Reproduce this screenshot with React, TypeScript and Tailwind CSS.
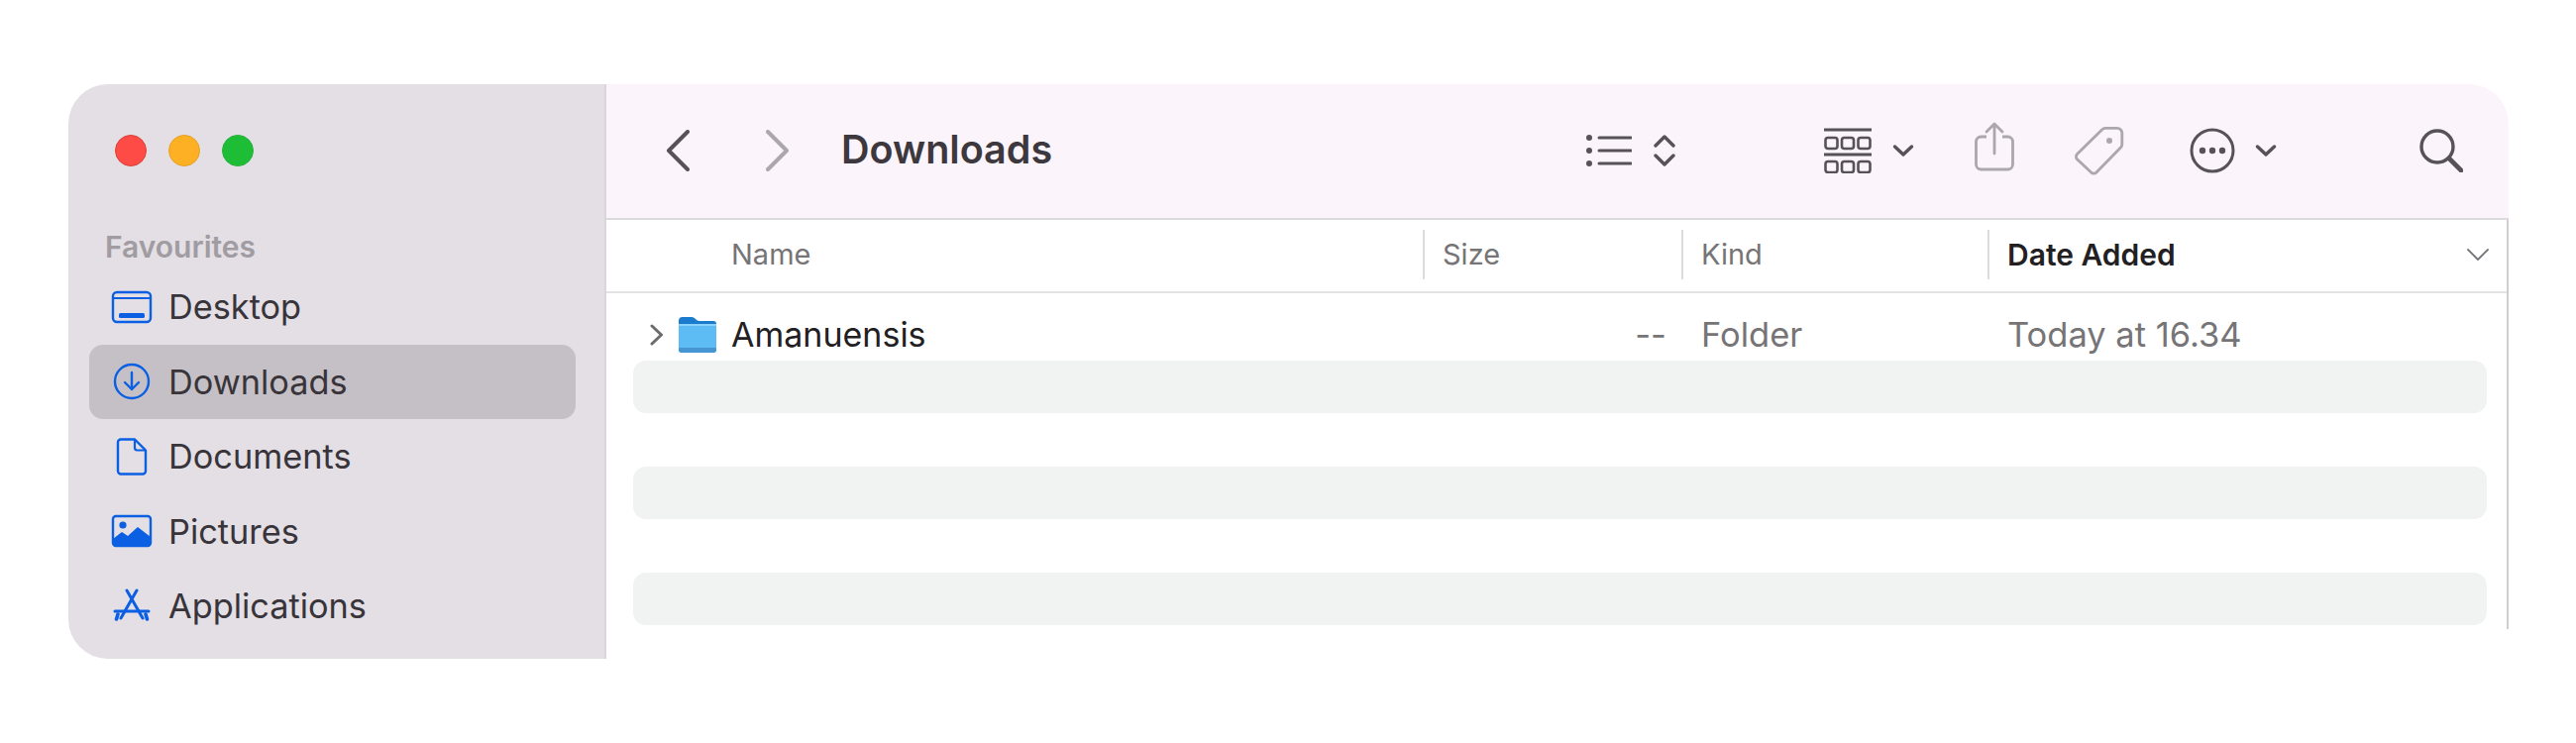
const FONT = "font-['Inter','Liberation_Sans',sans-serif]";

const IconBox = ({ w, h, children, className = "" }: { w: number; h: number; children: React.ReactNode; className?: string }) => (
  <svg width={w} height={h} viewBox={`0 0 ${w} ${h}`} fill="none" className={`shrink-0 ${className}`}>{children}</svg>
);

const BLUE = "#0b5fe3";

const DesktopIcon = () => (
  <IconBox w={44} h={34}>
    <rect x="3" y="2" width="38" height="30" rx="4" stroke={BLUE} strokeWidth="2.4" />
    <path d="M3 8h38" stroke={BLUE} strokeWidth="1.8" />
    <rect x="9" y="23" width="26" height="5" rx="1.5" fill={BLUE} />
  </IconBox>
);
const DownloadIcon = () => (
  <IconBox w={44} h={40}>
    <circle cx="22" cy="20" r="17" stroke={BLUE} strokeWidth="2.4" />
    <path d="M22 11v17M15 21l7 7 7-7" stroke={BLUE} strokeWidth="2.4" strokeLinecap="round" strokeLinejoin="round" />
  </IconBox>
);
const DocumentIcon = () => (
  <IconBox w={44} h={40}>
    <path d="M8 5.5a3 3 0 0 1 3-3h14l11 11v21a3 3 0 0 1-3 3H11a3 3 0 0 1-3-3z" stroke={BLUE} strokeWidth="2.4" strokeLinejoin="round" />
    <path d="M25 3v8a2.500 2.500 0 0 0 2.500 2.500H36" stroke={BLUE} strokeWidth="2.2" />
  </IconBox>
);
const PicturesIcon = () => (
  <IconBox w={44} h={34}>
    <rect x="3" y="2" width="38" height="30" rx="3" stroke={BLUE} strokeWidth="2.4" />
    <circle cx="13" cy="11" r="3.600" fill={BLUE} />
    <path d="M3 25l9-7 6 4 10-9 13 10v6a3 3 0 0 1-3 3H6a3 3 0 0 1-3-3z" fill={BLUE} />
  </IconBox>
);
const AppsIcon = () => (
  <IconBox w={44} h={36}>
    <path d="M17 2l16 28M27 2L11 30" stroke={BLUE} strokeWidth="3" strokeLinecap="round" />
    <path d="M5 23h34" stroke={BLUE} strokeWidth="3" strokeLinecap="round" />
    <path d="M8 26l-1.500 5M36 26l1.500 5" stroke={BLUE} strokeWidth="3.600" strokeLinecap="round" />
  </IconBox>
);

const DARK = "#575258";
const GREY = "#aba7ac";

const Caret = () => (
  <IconBox w={22} h={14}>
    <path d="M2.500 3l8.500 8 8.500-8" stroke={DARK} strokeWidth="3.400" strokeLinecap="round" strokeLinejoin="round" />
  </IconBox>
);

const ListIcon = () => (
  <IconBox w={46} h={34}>
    <g fill={DARK}>
      <circle cx="3" cy="4" r="3" />
      <circle cx="3" cy="17" r="3" />
      <circle cx="3" cy="30" r="3" />
    </g>
    <path d="M13 4h32M13 17h32M13 30h32" stroke={DARK} strokeWidth="3" strokeLinecap="round" />
  </IconBox>
);
const UpDown = () => (
  <IconBox w={22} h={36}>
    <path d="M2 13l9-9 9 9M2 23l9 9 9-9" stroke={DARK} strokeWidth="3.400" strokeLinecap="round" strokeLinejoin="round" />
  </IconBox>
);
const GroupIcon = () => (
  <IconBox w={48} h={46}>
    <path d="M0 2h48M0 27h48" stroke={DARK} strokeWidth="3" />
    {[0, 1, 2].map((i) => (
      <g key={i} stroke={DARK} strokeWidth="2.600">
        <rect x={1.5 + i * 16.5} y="10" width="12" height="11" rx="2.500" />
        <rect x={1.5 + i * 16.5} y="34" width="12" height="11" rx="2.500" />
      </g>
    ))}
  </IconBox>
);
const ShareIcon = () => (
  <IconBox w={40} h={50}>
    <path d="M12 15H6.500a5 5 0 0 0-5 5v23a5 5 0 0 0 5 5h27a5 5 0 0 0 5-5V20a5 5 0 0 0-5-5H28" stroke={GREY} strokeWidth="2.800" />
    <path d="M20 32V3M12 10l8-8 8 8" stroke={GREY} strokeWidth="2.800" strokeLinecap="round" strokeLinejoin="round" />
  </IconBox>
);
const TagIcon = () => (
  <IconBox w={50} h={50}>
    <path d="M2.500 28.500L28 3.500a4 4 0 0 1 2.800-1.200h12a5 5 0 0 1 5 5v11.500a4 4 0 0 1-1.200 2.900L22 47a3.800 3.800 0 0 1-5.400 0L2.500 33.800a3.800 3.800 0 0 1 0-5.300z" stroke={GREY} strokeWidth="2.800" strokeLinejoin="round" />
    <circle cx="35" cy="15" r="3" fill={GREY} />
  </IconBox>
);
const MoreIcon = () => (
  <IconBox w={46} h={46}>
    <circle cx="23" cy="23" r="21" stroke={DARK} strokeWidth="3" />
    <g fill={DARK}>
      <circle cx="13" cy="23" r="3.200" />
      <circle cx="23" cy="23" r="3.200" />
      <circle cx="33" cy="23" r="3.200" />
    </g>
  </IconBox>
);
const SearchIcon = () => (
  <IconBox w={44} h={44}>
    <circle cx="18" cy="18" r="16" stroke={DARK} strokeWidth="3.400" />
    <path d="M30 30l12 12" stroke={DARK} strokeWidth="4.600" strokeLinecap="round" />
  </IconBox>
);
const Folder = () => (
  <IconBox w={40} h={38}>
    <path d="M1 5a4 4 0 0 1 4-4h9c2 0 3 1 4.500 2.500S21 5 23 5h13a3 3 0 0 1 3 3v8H1z" fill="#1b7ccd" />
    <rect x="1" y="8" width="38" height="29" rx="3" fill="#5ebcf5" />
    <rect x="1" y="8" width="38" height="2" fill="#8dd2f8" />
    <path d="M1 32h38v2a3 3 0 0 1-3 3H4a3 3 0 0 1-3-3z" fill="#4495d2" />
  </IconBox>
);

const sidebarItems = [
  { label: "Desktop", icon: <DesktopIcon /> },
  { label: "Downloads", icon: <DownloadIcon />, active: true },
  { label: "Documents", icon: <DocumentIcon /> },
  { label: "Pictures", icon: <PicturesIcon /> },
  { label: "Applications", icon: <AppsIcon /> },
];

export default function App() {
  return (
    <div className={`min-h-[750px] bg-white pl-[69px] pt-[85px] ${FONT}`}>
      <div className="flex h-[580px] w-[2463px]">
        <aside className="w-[543px] shrink-0 rounded-l-[40px] border-r-2 border-[#d9d5da] bg-[#e3dfe4]">
          <div className="flex gap-[22px] pl-[47px] pt-[51px]">
            <span className="h-[32px] w-[32px] rounded-full border border-[#d9413c] bg-[#ff4b45]" />
            <span className="h-[32px] w-[32px] rounded-full border border-[#e3a32b] bg-[#feb024]" />
            <span className="h-[32px] w-[32px] rounded-full border border-[#2bb03f] bg-[#1dbe35]" />
          </div>
          <div className="mt-[64px] pl-[37px] text-[30px] font-semibold leading-[34px] text-[#a09ca2]">Favourites</div>
          <nav className="mt-[6px] flex flex-col pl-[21px] pr-[29px]">
            {sidebarItems.map((item) => (
              <div
                key={item.label}
                className={`flex h-[75.500px] items-center gap-[15px] rounded-[14px] pl-[21px] text-[34.300px] text-[#38343a] ${item.active ? "bg-[#c5c0c6]" : ""}`}
              >
                {item.icon}
                <span>{item.label}</span>
              </div>
            ))}
          </nav>
        </aside>
        <main className="flex min-w-0 flex-1 flex-col">
          <header className="flex h-[137px] shrink-0 items-center rounded-tr-[40px] border-b-2 border-[#dcdadd] bg-[#fbf4fb] pb-[2px] pl-[60px]">
            <svg width="24" height="42" viewBox="0 0 24 42" fill="none" className="shrink-0">
              <path d="M22 2L3 21l19 19" stroke={DARK} strokeWidth="4" strokeLinecap="round" strokeLinejoin="round" />
            </svg>
            <svg width="24" height="42" viewBox="0 0 24 42" fill="none" className="ml-[77px] shrink-0">
              <path d="M2 2l19 19L2 40" stroke={GREY} strokeWidth="4" strokeLinecap="round" strokeLinejoin="round" />
            </svg>
            <h1 className="ml-[52px] w-[212px] whitespace-nowrap text-[39.500px] font-semibold leading-none text-[#3c383d]">Downloads</h1>
            <div className="ml-[540px] flex items-center gap-[22px]"><ListIcon /><UpDown /></div>
            <div className="ml-[150px] flex items-center gap-[21px]"><GroupIcon /><Caret /></div>
            <div className="mb-[7px] ml-[61px]"><ShareIcon /></div>
            <div className="ml-[61px]"><TagIcon /></div>
            <div className="ml-[66px] flex items-center gap-[20px]"><MoreIcon /><Caret /></div>
            <div className="ml-[144px]"><SearchIcon /></div>
          </header>
          <div className="flex min-h-0 flex-1 flex-col pb-[30px]">
            <div className="flex min-h-0 flex-1 flex-col border-r-2 border-[#cfcdd0]">
              <div className="flex h-[74px] shrink-0 items-center border-b-2 border-[#e4e2e4] pb-[2px] text-[29px] text-[#767476]">
                <div className="w-[824px] pl-[126px]">Name</div>
                <div className="flex h-[50px] w-[261px] items-center border-l-2 border-[#dddcdd] pl-[18px]">Size</div>
                <div className="flex h-[50px] w-[309px] items-center border-l-2 border-[#dddcdd] pl-[18px]">Kind</div>
                <div className="flex h-[50px] flex-1 items-center justify-between border-l-2 border-[#dddcdd] pl-[18px] pr-[17px] text-[30px] font-semibold text-[#222022]">
                  <span>Date Added</span>
                  <svg width="24" height="14" viewBox="0 0 24 14" fill="none">
                    <path d="M2 2l10 10L22 2" stroke="#77757a" strokeWidth="1.800" strokeLinecap="round" strokeLinejoin="round" />
                  </svg>
                </div>
              </div>
              <div className="flex h-[68px] shrink-0 items-center pt-[15px] text-[34.500px] text-[#767476]">
                <div className="flex w-[824px] items-center pl-[44px] text-[#222022]">
                  <svg width="14" height="22" viewBox="0 0 14 22" fill="none" className="shrink-0">
                    <path d="M2 2l9.500 9L2 20" stroke="#6d6b6e" strokeWidth="3" strokeLinecap="round" strokeLinejoin="round" />
                  </svg>
                  <span className="ml-[14px]"><Folder /></span>
                  <span className="ml-[14px] text-[34px]">Amanuensis</span>
                </div>
                <div className="w-[261px] pr-[15px] text-right">--</div>
                <div className="w-[309px] pl-[20px]">Folder</div>
                <div className="pl-[20px]">Today at 16.34</div>
              </div>
              <div className="flex flex-col gap-[54px] pl-[27px] pr-[20px]">
                <div className="h-[53px] rounded-[13px] bg-[#f1f3f3]" />
                <div className="h-[53px] rounded-[13px] bg-[#f1f3f3]" />
                <div className="h-[53px] rounded-[13px] bg-[#f1f3f3]" />
              </div>
            </div>
          </div>
        </main>
      </div>
    </div>
  );
}
